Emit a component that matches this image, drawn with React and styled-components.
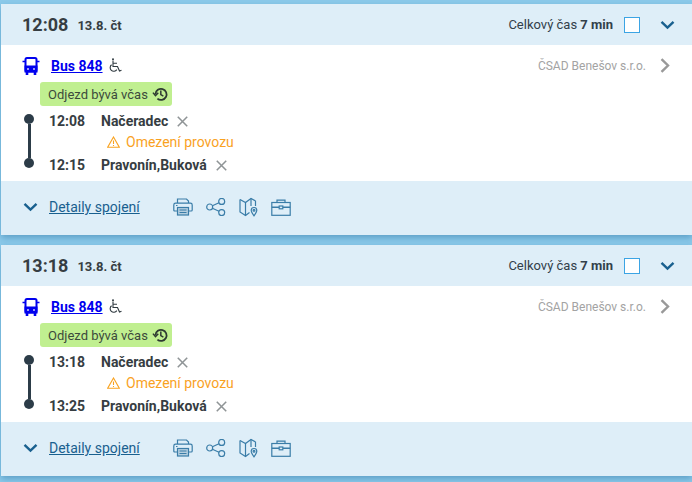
import React from "react";
import styled, { createGlobalStyle } from "styled-components";

const GlobalStyle = createGlobalStyle`
  html, body {
    margin: 0;
    padding: 0;
    background: #8ccaea;
    overflow: hidden;
    font-family: Roboto, "Liberation Sans", sans-serif;
  }
`;

const Page = styled.div`
  width: 692px;
  height: 482px;
  padding: 4px 0 0 1px;
  box-sizing: border-box;
  display: flex;
  flex-direction: column;
  gap: 10px;
  overflow: hidden;
`;

const Card = styled.div`
  height: 231px;
  display: flex;
  flex-direction: column;
  background: #fff;
  border-radius: 3px 0 0 3px;
  box-shadow: 0 3px 6px rgba(40, 110, 160, 0.45);
`;

const Header = styled.div`
  height: 41px;
  flex: none;
  display: flex;
  align-items: center;
  padding: 0 17px 0 21px;
  background: #deeef8;
  color: #363d42;
`;

const Time = styled.span`
  font-size: 18px;
  font-weight: 700;
`;

const DateText = styled.span`
  font-size: 13px;
  font-weight: 700;
  margin-left: 9px;
  margin-top: 2px;
`;

const Total = styled.span`
  margin-left: auto;
  font-size: 13px;
  color: #32404a;
  b {
    font-weight: 700;
  }
`;

const Check = styled.span`
  width: 14px;
  height: 14px;
  margin-left: 11px;
  border: 1px solid #3ba4e4;
  background: #fff;
`;

const Toggle = styled.span`
  display: flex;
  margin-left: 20px;
`;

const Body = styled.div`
  flex: 1;
  padding: 10px 22px 0 21px;
`;

const LineRow = styled.div`
  display: flex;
  align-items: center;
  height: 21px;
`;

const BusLink = styled.a`
  margin-left: 11px;
  font-size: 14px;
  font-weight: 700;
  color: #0000ee;
  text-decoration: underline;
`;

const Wheel = styled.span`
  display: flex;
  margin-left: 6px;
`;

const Carrier = styled.span`
  margin-left: auto;
  font-size: 12px;
  color: #a3a3a3;
`;

const Arrow = styled.span`
  display: flex;
  margin-left: 14px;
`;

const Badge = styled.div`
  display: inline-flex;
  align-items: center;
  gap: 4px;
  height: 24px;
  margin: 6px 0 0 18px;
  padding: 0 3px 0 8px;
  border-radius: 3px;
  background: #c0ef90;
  color: #3c4a3c;
  font-size: 13px;
`;

const Route = styled.div`
  display: flex;
  margin-top: 4px;
`;

const Track = styled.div`
  width: 12px;
  flex: none;
  display: flex;
  flex-direction: column;
  align-items: center;
  padding-top: 4px;
  margin-left: 1px;
`;

const Dot = styled.span`
  width: 10px;
  height: 10px;
  flex: none;
  border-radius: 50%;
  background: #2c3c48;
`;

const Bar = styled.span`
  width: 3px;
  height: 34px;
  background: #2c3c48;
`;

const Stops = styled.div`
  margin-left: 14px;
  display: flex;
  flex-direction: column;
`;

const Stop = styled.div`
  display: flex;
  align-items: center;
  height: 21px;
  font-size: 14px;
  font-weight: 700;
  color: #363d42;
`;

const StopTime = styled.span`
  width: 52px;
`;

const Remove = styled.span`
  display: flex;
  margin: 1px 0 0 9px;
`;

const Warning = styled.div`
  display: flex;
  align-items: center;
  gap: 6px;
  height: 21px;
  padding-bottom: 2px;
  margin-left: 58px;
  font-size: 14px;
  color: #f9a21f;
`;

const Footer = styled.div`
  height: 54px;
  flex: none;
  display: flex;
  align-items: center;
  padding: 0 0 2px 22px;
  box-sizing: border-box;
  background: #deeef8;
`;

const DetailLink = styled.a`
  margin-left: 11px;
  font-size: 14px;
  color: #19608f;
  text-decoration: underline;
`;

const Tools = styled.div`
  display: flex;
  align-items: center;
  gap: 13px;
  margin-left: 33px;
  color: #3a7da8;
`;

const Icon = styled.svg`
  display: block;
  fill: none;
  stroke: currentColor;
  stroke-width: 1.2;
`;

const Chevron = ({ w = 15, h = 10 }) => (
  <svg width={w} height={h} viewBox="0 0 15 10" fill="none" stroke="#19608f" strokeWidth="2.4">
    <path d="M1.5 1.8 7.5 7.6 13.5 1.8" />
  </svg>
);

const BusIcon = () => (
  <svg width="18" height="18" viewBox="0 0 18 18" fill="none" stroke="#0000ee" strokeWidth="2">
    <rect x="3.5" y="1" width="11" height="13.5" rx="1.5" />
    <rect x="3.5" y="9.5" width="11" height="5" fill="#0000ee" />
    <path d="M0.5 4.5h3M14.5 4.5h3" strokeWidth="1.3" />
    <path d="M5 15v3M13 15v3" strokeWidth="2.6" />
    <path d="M5.2 12h1.6M11.2 12h1.6" stroke="#fff" strokeWidth="1.6" />
  </svg>
);

const WheelIcon = () => (
  <svg width="13" height="15" viewBox="0 0 13 15" fill="none" stroke="#303a40" strokeWidth="1.1">
    <circle cx="4" cy="1.2" r="1" fill="#303a40" stroke="none" />
    <path d="M4 2.5V8.5H8.5L10.5 13 12.5 12.3M4 5.2H8" />
    <path d="M2.6 6.8A3.6 3.6 0 1 0 7.8 11.6" />
  </svg>
);

const HistoryIcon = () => (
  <svg width="17" height="16" viewBox="0 0 15 15" fill="none" stroke="#2e3a32" strokeWidth="1.7">
    <path d="M2.8 7.5A5.2 5.2 0 1 1 4.6 11.8" />
    <path d="M0.4 6.2 2.8 9 5.4 6.4" strokeWidth="1.4" />
    <path d="M7.8 4.2V8L10.2 9.4" strokeWidth="1.4" />
  </svg>
);

const CrossIcon = () => (
  <svg width="11" height="11" viewBox="0 0 10 10" stroke="#8f9496" strokeWidth="1.4">
    <path d="M.7.7 9.3 9.3M9.3.7.7 9.3" />
  </svg>
);

const WarnIcon = () => (
  <svg width="13" height="12" viewBox="0 0 13 12" fill="none" stroke="#f9a21f" strokeWidth="1.1">
    <path d="M6.5 1 12.3 11.2H.7Z" />
    <path d="M6.5 4.4V8M6.5 9V10" />
  </svg>
);

const ArrowIcon = () => (
  <svg width="10" height="15" viewBox="0 0 10 15" fill="none" stroke="#999" strokeWidth="2.4">
    <path d="M1.5 1.2 8 7.5 1.5 13.8" />
  </svg>
);

const PrinterIcon = () => (
  <Icon width="20" height="18" viewBox="0 0 20 18">
    <path d="M4.5 5V1h9L15.5 3V5" />
    <path d="M4 13H1.8Q.8 13 .8 12V7Q.8 5.2 2.6 5.2H17.4Q19.2 5.2 19.2 7V12Q19.2 13 18.2 13H16" />
    <rect x="4.5" y="9.5" width="11" height="7.5" fill="#b5cfdf" />
    <path d="M6.5 12h7M6.5 14.5h7" />
    <path d="M3 7.5h1.5" />
  </Icon>
);

const ShareIcon = () => (
  <Icon width="20" height="18" viewBox="0 0 20 18">
    <circle cx="3.7" cy="9" r="3" />
    <circle cx="15.7" cy="3.4" r="3" />
    <circle cx="15.7" cy="14.6" r="3" />
    <path d="M6.4 7.7 13 4.7M6.4 10.3 13 13.3" />
  </Icon>
);

const MapIcon = () => (
  <Icon width="19" height="20" viewBox="0 0 19 20">
    <path d="M1 2.5 6.5 5.5 12 1.5 16.5 4V9" />
    <path d="M1 2.5V15L6.5 18.5 10.5 15.5" />
    <path d="M6.5 5.5V18.5M12 1.5V9" />
    <path d="M15 10.5A2.8 2.8 0 0 1 17.8 13.3C17.8 15 15 18.8 15 18.8S12.2 15 12.2 13.3A2.8 2.8 0 0 1 15 10.5Z" />
    <circle cx="15" cy="13.3" r="0.9" />
  </Icon>
);

const CaseIcon = () => (
  <Icon width="20" height="17" viewBox="0 0 20 17">
    <path d="M6 3.5V1.2H14V3.5" />
    <rect x=".8" y="3.5" width="18.4" height="12.8" />
    <path d="M.8 8.2H8M12 8.2H19.2" strokeWidth="1.6" />
    <rect x="8.2" y="7" width="3.6" height="2.8" />
  </Icon>
);

const connections = [
  { depart: "12:08", arrive: "12:15" },
  { depart: "13:18", arrive: "13:25" },
];

const App = () => (
  <>
    <GlobalStyle />
    <Page>
      {connections.map((c) => (
        <Card key={c.depart}>
          <Header>
            <Time>{c.depart}</Time>
            <DateText>13.8. čt</DateText>
            <Total>
              Celkový čas <b>7 min</b>
            </Total>
            <Check />
            <Toggle>
              <Chevron />
            </Toggle>
          </Header>
          <Body>
            <LineRow>
              <BusIcon />
              <BusLink href="#">Bus 848</BusLink>
              <Wheel>
                <WheelIcon />
              </Wheel>
              <Carrier>ČSAD Benešov s.r.o.</Carrier>
              <Arrow>
                <ArrowIcon />
              </Arrow>
            </LineRow>
            <Badge>
              Odjezd bývá včas
              <HistoryIcon />
            </Badge>
            <Route>
              <Track>
                <Dot />
                <Bar />
                <Dot />
              </Track>
              <Stops>
                <Stop>
                  <StopTime>{c.depart}</StopTime>
                  Načeradec
                  <Remove>
                    <CrossIcon />
                  </Remove>
                </Stop>
                <Warning>
                  <WarnIcon />
                  Omezení provozu
                </Warning>
                <Stop>
                  <StopTime>{c.arrive}</StopTime>
                  Pravonín,Buková
                  <Remove>
                    <CrossIcon />
                  </Remove>
                </Stop>
              </Stops>
            </Route>
          </Body>
          <Footer>
            <Chevron />
            <DetailLink href="#">Detaily spojení</DetailLink>
            <Tools>
              <PrinterIcon />
              <ShareIcon />
              <MapIcon />
              <CaseIcon />
            </Tools>
          </Footer>
        </Card>
      ))}
    </Page>
  </>
);

export default App;
